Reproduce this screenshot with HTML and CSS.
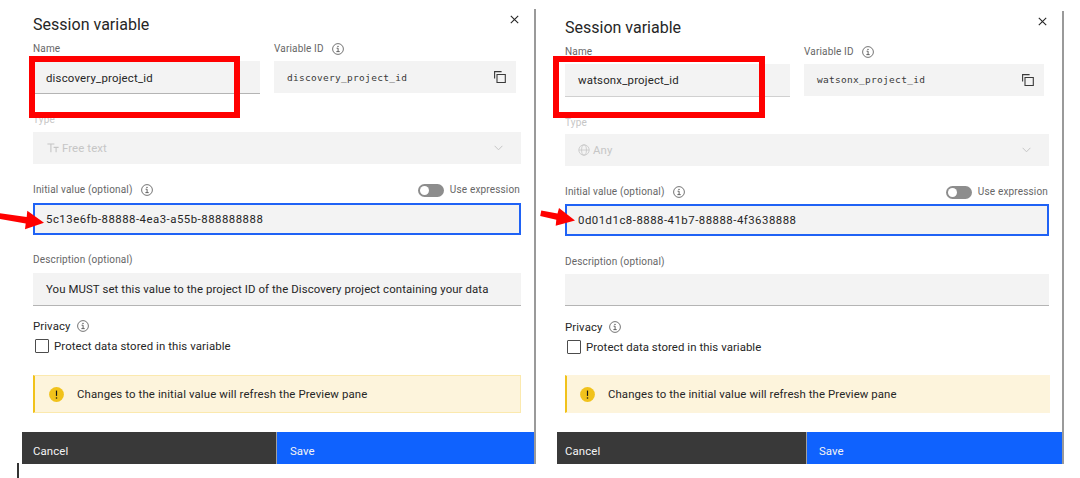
FILE: index.html
```html
<!DOCTYPE html>
<html lang="en">
<head>
<meta charset="utf-8">
<title>Session variable</title>
<link rel="stylesheet" href="styles.css">
</head>
<body>
<svg class="defs" width="0" height="0">
  <symbol id="info" viewBox="0 0 12 12"><circle cx="6" cy="6" r="5.4" fill="none" stroke="currentColor" stroke-width=".8"/><path d="M4.6 5.2H6.1V8.6M4.4 8.6H7.7" fill="none" stroke="currentColor" stroke-width=".9"/><circle cx="6" cy="3.4" r=".7" fill="currentColor"/></symbol>
  <symbol id="close" viewBox="0 0 9 9"><path d="M.8.8 8.2 8.2M8.2.8.8 8.2" stroke="currentColor" stroke-width="1.1"/></symbol>
  <symbol id="copy" viewBox="0 0 12 12"><path d="M3 3.5H11.3V11.5H3ZM.6 7.6V.6H7.6" fill="none" stroke="currentColor" stroke-width="1.1"/></symbol>
  <symbol id="chevron" viewBox="0 0 9 6"><path d="M.6.8 4.5 4.8 8.4.8" fill="none" stroke="currentColor" stroke-width="1"/></symbol>
  <symbol id="warn" viewBox="0 0 15 15"><circle cx="7.5" cy="7.5" r="7.4" fill="#f1c21b"/><path d="M7.5 3.6V8.9" stroke="#161616" stroke-width="1.2"/><circle cx="7.5" cy="11" r=".8" fill="#161616"/></symbol>
  <symbol id="type" viewBox="0 0 12 10"><path d="M.4 1H7.4M3.9 1V9.2M6.6 4.4H11.6M9.1 4.4V9.2" fill="none" stroke="currentColor" stroke-width="1.1"/></symbol>
  <symbol id="globe" viewBox="0 0 12 12"><g fill="none" stroke="currentColor" stroke-width=".8"><circle cx="6" cy="6" r="5.2"/><ellipse cx="6" cy="6" rx="2.4" ry="5.2"/><path d="M.8 6H11.2"/></g></symbol>
</svg>
<main class="page">
  <section class="dialog dialog-discovery">
    <header class="head"><h1 class="title">Session variable</h1><svg class="close"><use href="#close"/></svg></header>
    <div class="pair">
      <div class="label"><span>Name</span></div>
      <div class="label"><span>Variable ID</span><svg class="info"><use href="#info"/></svg></div>
      <div class="field lined"><span class="name">discovery_project_id</span></div>
      <div class="field mono"><span class="name">discovery_project_id</span><svg class="copy"><use href="#copy"/></svg></div>
    </div>
    <div class="label disabled type-label"><span>Type</span></div>
    <div class="field disabled select"><svg class="kind tt"><use href="#type"/></svg><span>Free text</span><svg class="chevron"><use href="#chevron"/></svg></div>
    <div class="label value-label"><span>Initial value (optional)</span><svg class="info"><use href="#info"/></svg><i class="toggle"></i><span>Use expression</span></div>
    <div class="field focus"><span>5c13e6fb-88888-4ea3-a55b-888888888</span></div>
    <div class="label desc-label"><span>Description (optional)</span></div>
    <div class="field lined desc"><span>You MUST set this value to the project ID of the Discovery project containing your data</span></div>
    <div class="privacy"><span>Privacy</span><svg class="info"><use href="#info"/></svg></div>
    <div class="check"><i class="box"></i><span>Protect data stored in this variable</span></div>
    <div class="notice"><svg class="warn"><use href="#warn"/></svg><span>Changes to the initial value will refresh the Preview pane</span></div>
    <footer class="actions"><div class="cancel">Cancel</div><div class="save">Save</div></footer>
  </section>
  <section class="dialog dialog-watsonx">
    <header class="head"><h1 class="title">Session variable</h1><svg class="close"><use href="#close"/></svg></header>
    <div class="pair">
      <div class="label"><span>Name</span></div>
      <div class="label"><span>Variable ID</span><svg class="info"><use href="#info"/></svg></div>
      <div class="field lined name-field"><span class="name">watsonx_project_id</span></div>
      <div class="field mono"><span class="name">watsonx_project_id</span><svg class="copy"><use href="#copy"/></svg></div>
    </div>
    <div class="label disabled type-label"><span>Type</span></div>
    <div class="field disabled select"><svg class="kind"><use href="#globe"/></svg><span>Any</span><svg class="chevron"><use href="#chevron"/></svg></div>
    <div class="label value-label"><span>Initial value (optional)</span><svg class="info"><use href="#info"/></svg><i class="toggle"></i><span>Use expression</span></div>
    <div class="field focus"><span>0d01d1c8-8888-41b7-88888-4f3638888</span></div>
    <div class="label desc-label"><span>Description (optional)</span></div>
    <div class="field lined desc"></div>
    <div class="privacy"><span>Privacy</span><svg class="info"><use href="#info"/></svg></div>
    <div class="check"><i class="box"></i><span>Protect data stored in this variable</span></div>
    <div class="notice"><svg class="warn"><use href="#warn"/></svg><span>Changes to the initial value will refresh the Preview pane</span></div>
    <footer class="actions"><div class="cancel">Cancel</div><div class="save">Save</div></footer>
  </section>
  <svg class="marks" width="1080" height="478" viewBox="0 0 1080 478">
    <rect x="32" y="59" width="205" height="56"/>
    <rect x="556" y="59" width="206" height="56"/>
    <path d="M0 213.3 26.7 217 27.3 210.7 44 222.7 25 229.3 25.7 223.5 0 219ZM541.3 210.5 557.5 213.5 559 208 575 220.5 555.7 225.8 556.3 219.7 540.2 216Z"/>
  </svg>
  <i class="caret"></i>
</main>
</body>
</html>
```

FILE: styles.css
```css
* { box-sizing: border-box; }
body { margin: 0; background: #fff; }
.defs { position: absolute; }
.page {
  position: relative; display: flex; align-items: flex-start; gap: 21px;
  width: 1080px; height: 478px; padding-left: 22px; overflow: hidden;
  font: 11.4px/20px Roboto, "Noto Sans", sans-serif; color: #262626; letter-spacing: .1px; white-space: nowrap;
}
.dialog { display: grid; border-right: 2px solid #9a9a9a; grid-template-columns: 100%; }
.dialog > * { margin-left: 11px; margin-right: 13px; }
.dialog-discovery { width: 514px; margin-top: 9px; grid-template-rows: 30px 55px 16px 20px 2px 32px 16px 20px 3px 32px 15px 20px 3px 33px 10px 20px 20px 19px 38px 19px 32px; }
.dialog-watsonx { width: 507px; margin-top: 11px; grid-template-rows: 31px 55px 16px 20px 1px 32px 16px 20px 2px 32px 16px 20px 2px 32px 11px 20px 20px 18px 38px 19px 32px; }
.dialog-watsonx > * { margin-left: 8px; }
.pair { grid-row: 2; }
.type-label { grid-row: 4; }
.select { grid-row: 6; }
.value-label { grid-row: 8; }
.focus { grid-row: 10; }
.desc-label { grid-row: 12; }
.desc { grid-row: 14; }
.privacy { grid-row: 16; }
.check { grid-row: 17; }
.notice { grid-row: 19; }
.dialog > .actions { grid-row: 21; margin: 0; }

.head { display: flex; justify-content: space-between; padding-right: 2px; }
.title { margin: 0; font-size: 16px; font-weight: 400; line-height: 32px; letter-spacing: .02px; }
.dialog-watsonx .title { line-height: 34px; letter-spacing: 0; }
.close { width: 9px; height: 9px; margin-top: 6px; }
.pair { display: grid; grid-template-columns: 227px 242px; grid-template-rows: 22px 33px; column-gap: 14px; }
.dialog-watsonx .pair { grid-template-columns: 225px 240px; }
.label { display: flex; align-items: center; height: 20px; font-size: 10px; letter-spacing: .16px; color: #666; }
.label .info { width: 12px; height: 12px; margin-left: 8px; color: #525252; }
.privacy .info { width: 12px; height: 12px; margin-left: 6px; color: #525252; }
.field { display: flex; align-items: center; background: #f3f3f3; padding-left: 13px; }
.lined { border-bottom: 1px solid #b4b4b4; }
.name { padding-top: 1px; letter-spacing: .2px; }
.dialog-watsonx .name { padding-top: 0; }
.name-field { border-color: #d0d0d0; }
.mono { height: 32px; padding-right: 10px; justify-content: space-between; font-family: "DejaVu Sans Mono", monospace; font-size: 9.5px; color: #393939; }
.mono .name { letter-spacing: .29px; }
.copy { width: 12px; height: 12px; }
.disabled { color: #c6c6c6; }
.select { padding-right: 18px; }
.kind { width: 12px; height: 12px; margin-right: 3px; }
.tt { height: 10px; margin: 0 3px 0 1px; }
.chevron { width: 9px; height: 6px; margin-left: auto; }
.toggle { width: 26px; height: 13px; margin: 0 6px 0 auto; border-radius: 7px; background: #8d8d8d; }
.toggle::before { content: ""; display: block; width: 9px; height: 9px; margin: 2px; border-radius: 50%; background: #fff; }
.value-label { padding-right: 1px; }
.focus { border: 2px solid #1f62f5; padding-left: 11px; letter-spacing: .49px; }
.privacy, .check { display: flex; align-items: center; }
.box { width: 14px; height: 14px; margin: 0 5px 0 2px; border: 1px solid #4c4c4c; border-radius: 1px; }
.dialog-watsonx .check { letter-spacing: .06px; }
.notice { display: flex; align-items: center; padding-left: 14px; background: #fdf4dc; border: 1px solid #fbe9ae; border-left: 2px solid #f1c21b; letter-spacing: .12px; }
.dialog-watsonx .notice { margin-right: 12px; padding-left: 13px; border-color: #fdf4dc; border-left-color: #f1c21b; letter-spacing: .09px; }
.warn { width: 15px; height: 15px; margin-right: 13px; }
.actions { display: grid; grid-template-columns: 254px 1fr; gap: 1px; background: #a0a0a0; color: #f4f4f4; line-height: 39px; overflow: hidden; }
.dialog-watsonx .actions { grid-template-columns: 249px 1fr; }
.cancel { padding-left: 11px; background: #393939; }
.save { padding-left: 13px; background: #0f62fe; }
.dialog-watsonx .cancel { padding-left: 8px; }
.dialog-watsonx .save { padding-left: 12px; }

.marks { position: absolute; left: 0; top: 0; }
.marks rect { fill: none; stroke: #f00; stroke-width: 6; }
.marks path { fill: #f00; }
.caret { position: absolute; left: 17px; top: 463px; width: 2px; height: 15px; background: #333; }
```
